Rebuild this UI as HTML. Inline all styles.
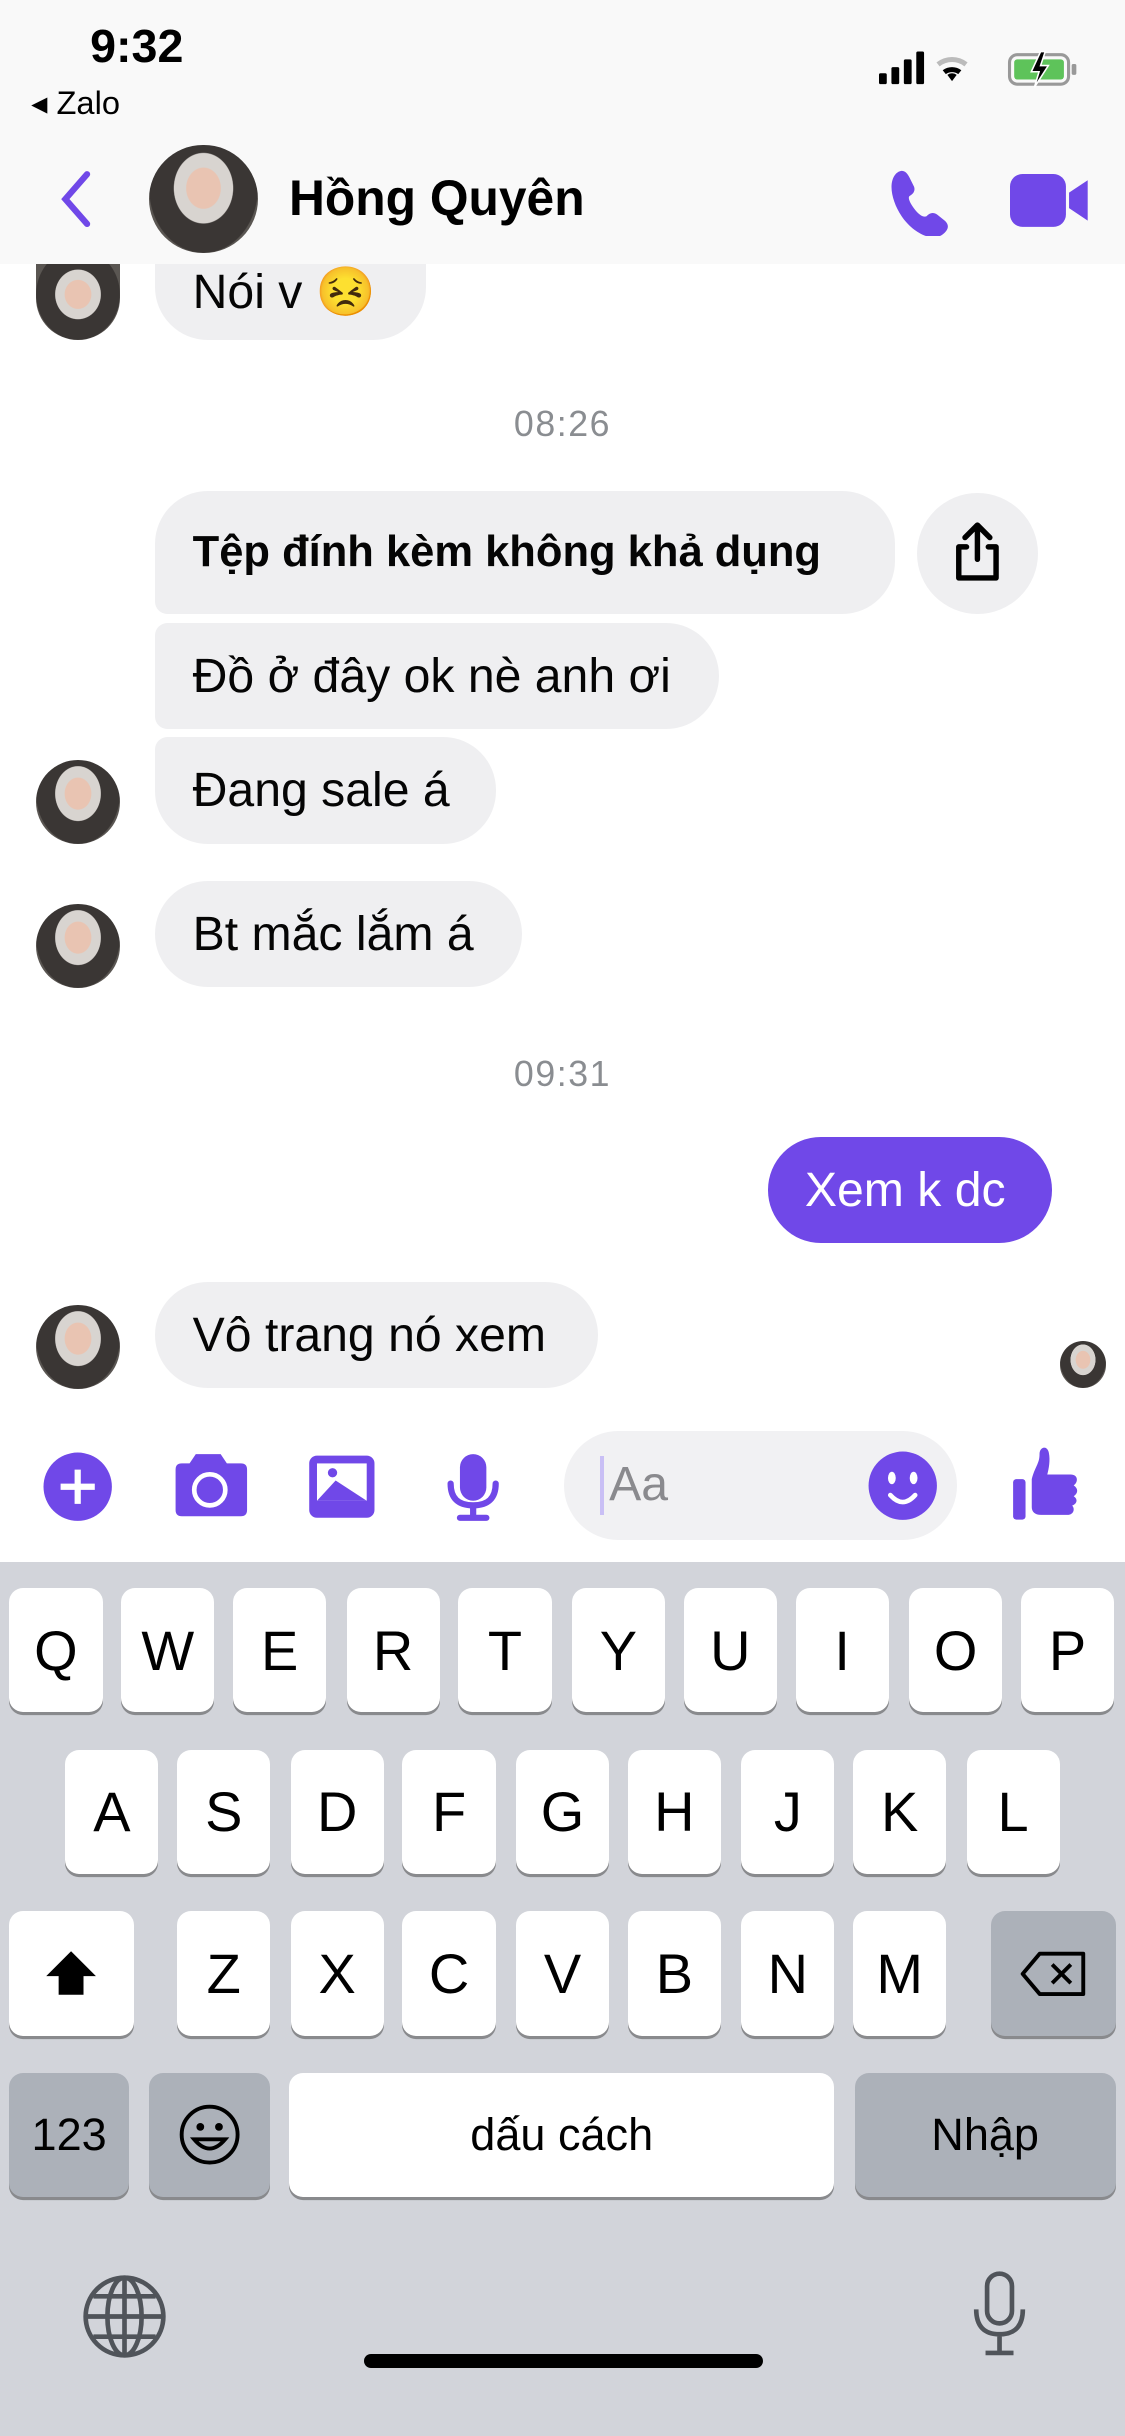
<!DOCTYPE html>
<html><head><meta charset="utf-8"><style>
html,body{margin:0;padding:0;background:#fff;overflow:hidden}
#p{position:relative;width:724px;height:1568px;zoom:1.55387;font-family:"Liberation Sans",Arial,sans-serif;background:#fff;overflow:hidden}
.a{position:absolute}
.b{position:absolute;background:#efeff1;border-radius:34px;color:#050505;font-size:31px;display:flex;align-items:center;padding:0 24px;box-sizing:border-box;white-space:nowrap}
.av{position:absolute;width:54px;height:54px;border-radius:50%;background:radial-gradient(ellipse at 50% 40%,#e9c4b2 0 22%,#d8d4d0 23% 38%,#3a3634 39% 70%,#5a5652 71%);}
.ts{position:absolute;width:724px;text-align:center;color:#8a8d91;font-size:23px;letter-spacing:1px}
.k{position:absolute;background:#fff;border-radius:9px;box-shadow:0 2px 0 #898a8d;display:flex;align-items:center;justify-content:center;font-size:36px;color:#000;height:80px}
.s{background:#acb1b9}
.ic{fill:#7048e8}
</style></head><body><div id="p">
<div class="a" style="left:0;top:0;width:724px;height:170px;background:#f9f9f9"></div>
<div class="a" style="left:58px;top:12px;font-size:30px;font-weight:bold">9:32</div>
<div class="a" style="left:20px;top:54px;font-size:21px">◂ Zalo</div>
<svg class="a" style="left:566px;top:32px" width="130" height="26"><rect x="0" y="15" width="5" height="7" rx="1"/><rect x="8" y="11" width="5" height="11" rx="1"/><rect x="16" y="6" width="5" height="16" rx="1"/><rect x="24" y="1" width="5" height="21" rx="1"/>
<path d="M47 20 l-3 -4 a5 5 0 0 1 6 0 z" fill="#000"/><path d="M41 13 a10 10 0 0 1 12 0 l-2 2.5 a7 7 0 0 0 -8 0z" fill="#000"/><path d="M37 8 a16 16 0 0 1 20 0 l-2 2.5 a13 13 0 0 0 -16 0z" fill="#bbb"/>
<rect x="84" y="3" width="38" height="19" rx="5" fill="none" stroke="#999" stroke-width="2"/><rect x="87" y="6" width="32" height="13" rx="2" fill="#5ec35a"/><rect x="124" y="9" width="3" height="7" rx="1" fill="#999"/><path d="M104 1 l-6 13 h5 l-3 10 l9 -14 h-5 l3 -9z" fill="#000" stroke="#fff" stroke-width="1"/></svg>
<svg class="a" style="left:36px;top:108px" width="26" height="40"><path d="M20 4 L6 20 L20 36" stroke="#7048e8" stroke-width="4" fill="none" stroke-linecap="round"/></svg>
<div class="av" style="left:96px;top:93px;width:70px;height:70px"></div>
<div class="a" style="left:186px;top:109px;font-size:32px;font-weight:bold">Hồng Quyên</div>
<svg class="a" style="left:568px;top:106px" width="48" height="46"><path class="ic" d="M8 6 c4-4 7-2 9 2 l3 6 c1 3 -1 5 -3 6 c-1 1 0 4 3 8 c3 4 6 6 8 5 c2-2 4-3 7-1 l5 4 c3 3 2 6-2 9 c-8 5-20-3-26-12 c-6-9-9-21-4-27z"/></svg>
<svg class="a" style="left:650px;top:112px" width="52" height="34"><rect class="ic" x="0" y="0" width="36" height="34" rx="8"/><path class="ic" d="M38 12 L50 4 V30 L38 22z"/></svg>

<div class="b" style="left:100px;top:170px;width:174px;height:49px;border-top-left-radius:0;border-top-right-radius:0;padding-bottom:14px">Nói v 😣</div>
<div class="av" style="left:23px;top:170px;height:49px;border-radius:0 0 27px 27px"></div>
<div class="ts" style="top:260px">08:26</div>
<div class="b" style="left:100px;top:316px;width:476px;height:79px;font-weight:bold;font-size:28px;border-bottom-left-radius:8px">Tệp đính kèm không khả dụng</div>
<div class="a" style="left:590px;top:317px;width:78px;height:78px;border-radius:50%;background:#efeff1"></div>
<svg class="a" style="left:612px;top:336px" width="34" height="40"><path d="M17 24 V3 M9 10 L17 2 L25 10 M10 16 H5 V36 H29 V16 H24" stroke="#000" stroke-width="3.5" fill="none" stroke-linejoin="round" stroke-linecap="round"/></svg>
<div class="b" style="left:100px;top:401px;width:363px;height:68px;border-radius:8px 34px 34px 8px">Đồ ở đây ok nè anh ơi</div>
<div class="b" style="left:100px;top:474px;width:219px;height:69px;border-top-left-radius:8px">Đang sale á</div>
<div class="av" style="left:23px;top:489px"></div>
<div class="b" style="left:100px;top:567px;width:236px;height:68px">Bt mắc lắm á</div>
<div class="av" style="left:23px;top:582px"></div>
<div class="ts" style="top:678px">09:31</div>
<div class="b" style="left:494px;top:732px;width:183px;height:68px;background:#7048e8;color:#fff">Xem k dc</div>
<div class="b" style="left:100px;top:825px;width:285px;height:68px">Vô trang nó xem</div>
<div class="av" style="left:23px;top:840px"></div>
<div class="av" style="left:682px;top:863px;width:30px;height:30px"></div>

<svg class="a" style="left:0;top:925px" width="724" height="70">
<circle class="ic" cx="50" cy="32" r="22"/><path d="M50 21 V43 M39 32 H61" stroke="#fff" stroke-width="4"/>
<path class="ic" d="M113 17 h9 l4-6 h16 l4 6 h9 q4 0 4 4 v26 q0 4-4 4 h-38 q-4 0-4-4 v-26 q0-4 4-4z"/><circle cx="135" cy="34" r="10" fill="none" stroke="#fff" stroke-width="3"/>
<rect class="ic" x="199" y="12" width="42" height="40" rx="5"/><rect x="204" y="17" width="32" height="24" fill="#fff"/><path class="ic" d="M204 41 L216 28 L236 41z"/><circle class="ic" cx="214" cy="23" r="3"/>
<rect class="ic" x="296" y="11" width="17" height="30" rx="8.5"/><path d="M290 30 q0 14 14.5 14 q14.5 0 14.5-14 M304.5 44 V52 M296 52 H313" stroke="#7048e8" stroke-width="4" fill="none" stroke-linecap="round"/>
</svg>
<div class="a" style="left:363px;top:921px;width:253px;height:70px;border-radius:35px;background:#f1f1f3"></div>
<div class="a" style="left:386px;top:937px;width:3px;height:38px;background:#c9bff5"></div>
<div class="a" style="left:392px;top:937px;font-size:31px;color:#8a8a8e">Aa</div>
<svg class="a" style="left:558px;top:933px" width="46" height="46"><circle class="ic" cx="23" cy="23" r="22"/><ellipse cx="16" cy="18" rx="2.5" ry="4" fill="#fff"/><ellipse cx="30" cy="18" rx="2.5" ry="4" fill="#fff"/><path d="M15 29 q8 9 16 0" stroke="#fff" stroke-width="3" fill="none" stroke-linecap="round"/></svg>
<svg class="a" style="left:650px;top:930px" width="48" height="50"><rect class="ic" x="2" y="22" width="8" height="26" rx="2"/><path class="ic" d="M14 22 c2-8 5-10 5-16 c0-5 5-6 6-1 c1 5 0 10-1 14 h15 c5 0 5 5 2 7 c3 2 3 5 0 7 c3 2 2 5-1 6 c2 2 1 6-3 6 h-17 c-4 0-6-2-6-5z"/></svg>

<div class="a" style="left:0;top:1005px;width:724px;height:563px;background:#d2d4da"></div>
<div class="k" style="left:6px;top:1022px;width:60px">Q</div>
<div class="k" style="left:78px;top:1022px;width:60px">W</div>
<div class="k" style="left:150px;top:1022px;width:60px">E</div>
<div class="k" style="left:223px;top:1022px;width:60px">R</div>
<div class="k" style="left:295px;top:1022px;width:60px">T</div>
<div class="k" style="left:368px;top:1022px;width:60px">Y</div>
<div class="k" style="left:440px;top:1022px;width:60px">U</div>
<div class="k" style="left:512px;top:1022px;width:60px">I</div>
<div class="k" style="left:585px;top:1022px;width:60px">O</div>
<div class="k" style="left:657px;top:1022px;width:60px">P</div>
<div class="k" style="left:42px;top:1126px;width:60px">A</div>
<div class="k" style="left:114px;top:1126px;width:60px">S</div>
<div class="k" style="left:187px;top:1126px;width:60px">D</div>
<div class="k" style="left:259px;top:1126px;width:60px">F</div>
<div class="k" style="left:332px;top:1126px;width:60px">G</div>
<div class="k" style="left:404px;top:1126px;width:60px">H</div>
<div class="k" style="left:477px;top:1126px;width:60px">J</div>
<div class="k" style="left:549px;top:1126px;width:60px">K</div>
<div class="k" style="left:622px;top:1126px;width:60px">L</div>
<div class="k" style="left:6px;top:1230px;width:80px"><svg width="40" height="36"><path d="M20 4 L4 20 H12 V32 H28 V20 H36z" fill="#000"/></svg></div>
<div class="k" style="left:114px;top:1230px;width:60px">Z</div>
<div class="k" style="left:187px;top:1230px;width:60px">X</div>
<div class="k" style="left:259px;top:1230px;width:60px">C</div>
<div class="k" style="left:332px;top:1230px;width:60px">V</div>
<div class="k" style="left:404px;top:1230px;width:60px">B</div>
<div class="k" style="left:477px;top:1230px;width:60px">N</div>
<div class="k" style="left:549px;top:1230px;width:60px">M</div>
<div class="k s" style="left:638px;top:1230px;width:80px"><svg width="46" height="32"><path d="M14 3 H42 V29 H14 L3 16z" fill="none" stroke="#000" stroke-width="2.5" stroke-linejoin="round"/><path d="M22 10 L34 22 M34 10 L22 22" stroke="#000" stroke-width="2.5"/></svg></div>
<div class="k s" style="left:6px;top:1334px;width:77px;font-size:29px">123</div>
<div class="k s" style="left:96px;top:1334px;width:78px"><svg width="42" height="42"><circle cx="21" cy="21" r="18" fill="none" stroke="#000" stroke-width="2.5"/><circle cx="15" cy="16" r="2.5"/><circle cx="27" cy="16" r="2.5"/><path d="M11 24 q10 12 20 0z" fill="none" stroke="#000" stroke-width="2.5"/></svg></div>
<div class="k" style="left:186px;top:1334px;width:351px;font-size:29px">dấu cách</div>
<div class="k s" style="left:550px;top:1334px;width:168px;font-size:29px">Nhập</div>
<svg class="a" style="left:52px;top:1463px" width="56" height="56"><circle cx="28" cy="28" r="25" fill="none" stroke="#50545a" stroke-width="3"/><ellipse cx="28" cy="28" rx="11" ry="25" fill="none" stroke="#50545a" stroke-width="3"/><path d="M28 3 V53 M3 28 H53 M8 15 H48 M8 41 H48" stroke="#50545a" stroke-width="3"/></svg>
<svg class="a" style="left:624px;top:1460px" width="40" height="60"><rect x="11" y="3" width="16" height="32" rx="8" fill="none" stroke="#50545a" stroke-width="3"/><path d="M4 26 q0 16 15 16 q15 0 15-16 M19 42 V54 M10 54 H28" stroke="#50545a" stroke-width="3" fill="none"/></svg>
<div class="a" style="left:234px;top:1515px;width:257px;height:9px;border-radius:5px;background:#000"></div>
</div></body></html>
